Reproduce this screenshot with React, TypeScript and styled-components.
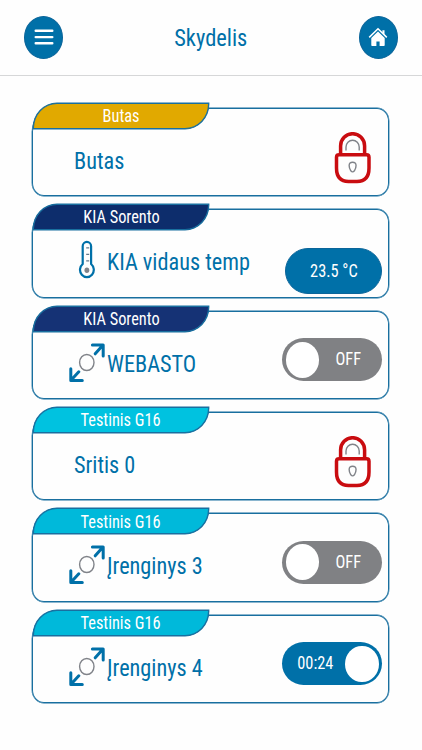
import React from 'react';
import styled, { createGlobalStyle } from 'styled-components';

const BLUE = '#0070a8';
const EDGE = '#196f9f';

const GlobalStyle = createGlobalStyle`
  * { box-sizing: border-box; }
  body { margin: 0; background: #fefefe; font-family: 'Roboto Condensed', Roboto, sans-serif; font-stretch: 75%; }
`;

const Screen = styled.div`
  width: 422px;
  height: 750px;
  overflow: hidden;
  background: #fefefe;
`;

const Header = styled.header`
  height: 76px;
  padding: 0 24px;
  display: flex;
  align-items: center;
  justify-content: space-between;
  border-bottom: 1px solid #d6d7d8;
`;

const RoundButton = styled.button`
  width: 39.4px;
  height: 43.4px;
  padding: 0;
  border: 1px solid #0b659a;
  border-radius: 50%;
  background: ${BLUE};
  display: grid;
  place-items: center;
`;

const Label = styled.span<{ $size: number; $origin?: string }>`
  display: block;
  white-space: nowrap;
  font-size: ${p => p.$size}px;
  line-height: 1;
  transform: scaleX(0.92);
  transform-origin: ${p => p.$origin ?? 'center'};
`;

const Title = styled.h1`
  margin: 0;
  padding-top: 1px;
  font-weight: 400;
  line-height: 1;
  color: ${BLUE};
`;

const List = styled.main`
  padding: 31.9px 33px 0 32px;
  display: flex;
  flex-direction: column;
  gap: 13px;
`;

const Card = styled.section`
  position: relative;
  height: 88.4px;
  border: 1px solid ${EDGE};
  box-shadow: 0 0 0 0.4px ${EDGE};
  border-radius: 22px 12px 12px 12px / 24px 13px 13px 13px;
  padding: 25px 6px 0 36px;
  display: flex;
  align-items: flex-start;
`;

const Tab = styled.div<{ $color: string }>`
  position: absolute;
  left: 0;
  top: -6px;
  width: 176px;
  height: 26px;
  border: 1px solid ${EDGE};
  box-shadow: 0 0 0 0.4px ${EDGE};
  border-radius: 24px 0 24px 0 / 25px 0 25px 0;
  background: ${p => p.$color};
  color: #fff;
  display: grid;
  place-items: center;
`;

const IconSlot = styled.div`
  width: 38px;
  height: 46px;
  flex: none;
`;

const Name = styled.div<{ $plain?: boolean }>`
  flex: 1;
  padding-top: 15px;
  padding-left: ${p => (p.$plain ? 5 : 0)}px;
  color: ${BLUE};
`;

const Reading = styled.div`
  width: 97px;
  height: 46px;
  margin-top: 13px;
  border: 1px solid #0b659a;
  border-radius: 23px;
  background: ${BLUE};
  color: #fff;
  display: grid;
  place-items: center;
`;

const Toggle = styled.button<{ $on?: boolean }>`
  width: 100px;
  height: 43px;
  margin-top: 1.4px;
  padding: 0 3.5px;
  border: 0;
  border-radius: 22px;
  background: ${p => (p.$on ? BLUE : '#808184')};
  color: #fff;
  font: inherit;
  display: flex;
  flex-direction: ${p => (p.$on ? 'row-reverse' : 'row')};
  align-items: center;
`;

const Knob = styled.span`
  width: 33.4px;
  height: 36px;
  border-radius: 50%;
  background: #fff;
`;

const ToggleText = styled.span`
  flex: 1;
  padding-right: 1px;
  padding-bottom: 1px;
  text-align: center;
`;

const LockSlot = styled.div`
  width: 37px;
  height: 52px;
  margin: -2px 11px 0 0;
`;

const Menu = () => (
  <svg width="20" height="16" viewBox="0 0 20 16" stroke="#fff" strokeWidth="2.4" strokeLinecap="round">
    <path d="M1.7 1.8h16.6M1.7 8.1h16.6M1.7 14.3h16.6" />
  </svg>
);

const Home = () => (
  <svg width="20" height="20" viewBox="0 0 20 20">
    <path d="M1.2 10.4 10 1.8l8.8 8.6" fill="none" stroke="#fff" strokeWidth="1.5" />
    <path d="M14.4 3.2h2.1v5l-2.1-2.2z" fill="#fff" />
    <path d="M3.300 10.900 10 4.500l6.700 6.400v7.400a.8.8 0 0 1-.8.8h-4.300v-4.500H8.400v4.500H4.100a.8.8 0 0 1-.8-.8z" fill="#fff" />
  </svg>
);

const Lock = () => (
  <svg width="37" height="52" viewBox="0 0 37 52" fill="none">
    <path d="M6.6 23V14a12 12.3 0 0 1 24 0v9" stroke="#c90c10" strokeWidth="3.5" />
    <path d="M4.4 22.8h28.2q2.4 0 2.4 2.5v10.700q0 13.500-12 13.500h-8.500q-12 0-12-13.500v-10.700q0-2.500 2.400-2.500z" stroke="#c90c10" strokeWidth="3.5" />
    <path d="M12 18.500v-3.500a6.600 6.800 0 0 1 13.200 0v3.500" stroke="#808389" strokeWidth="1.4" />
    <path d="M18.600 30.300c-5 0-3.600 5.500-1.800 8.500q1.800 2.200 3.600 0c1.800-3 3.200-8.500-1.800-8.500z" stroke="#808389" strokeWidth="1.4" />
  </svg>
);

const Expand = () => (
  <svg width="38" height="46" viewBox="0 0 38 46" fill="none">
    <g stroke={BLUE} strokeWidth="3" strokeLinecap="round" strokeLinejoin="round">
      <path d="M23.400 7.900h10.800v11M34 8.100l-7.800 8.700" />
      <path d="M1.800 31.800v11.700h11.500M2 43.200l7.800-8.400" />
    </g>
    <ellipse cx="17.800" cy="25.500" rx="7.200" ry="8" stroke="#808389" strokeWidth="1.400" />
  </svg>
);

const Thermometer = () => (
  <svg width="38" height="46" viewBox="0 0 38 46" fill="none">
    <path d="M13.700 29V11.200a4.200 4.300 0 0 1 8.400 0V29a6.900 7.300 0 1 1-8.400 0z" stroke={BLUE} strokeWidth="2.200" />
    <path d="M17.200 12.800h3M17.200 19.300h3M17.200 25.800h3" stroke="#65798b" strokeWidth="1.200" />
    <ellipse cx="17.900" cy="35.300" rx="2.400" ry="2.700" fill="#808389" />
  </svg>
);

type Item = {
  group: string;
  color: string;
  name: string;
  kind: 'lock' | 'temp' | 'switch';
  value?: string;
  on?: boolean;
};

const items: Item[] = [
  { group: 'Butas', color: '#e1a900', name: 'Butas', kind: 'lock' },
  { group: 'KIA Sorento', color: '#0d2d6c', name: 'KIA vidaus temp', kind: 'temp', value: '23.5 °C' },
  { group: 'KIA Sorento', color: '#153275', name: 'WEBASTO', kind: 'switch', value: 'OFF' },
  { group: 'Testinis G16', color: '#00c2e0', name: 'Sritis 0', kind: 'lock' },
  { group: 'Testinis G16', color: '#00b9da', name: 'Įrenginys 3', kind: 'switch', value: 'OFF' },
  { group: 'Testinis G16', color: '#00b9da', name: 'Įrenginys 4', kind: 'switch', value: '00:24', on: true },
];

export default function App() {
  return (
    <Screen>
      <GlobalStyle />
      <Header>
        <RoundButton aria-label="Menu"><Menu /></RoundButton>
        <Title><Label $size={24.4}>Skydelis</Label></Title>
        <RoundButton aria-label="Home"><Home /></RoundButton>
      </Header>
      <List>
        {items.map((item, i) => (
          <Card key={i}>
            <Tab $color={item.color}><Label $size={17.8}>{item.group}</Label></Tab>
            {item.kind !== 'lock' && (
              <IconSlot>{item.kind === 'temp' ? <Thermometer /> : <Expand />}</IconSlot>
            )}
            <Name $plain={item.kind === 'lock'}>
              <Label $size={24.2} $origin="left">{item.name}</Label>
            </Name>
            {item.kind === 'lock' && <LockSlot><Lock /></LockSlot>}
            {item.kind === 'temp' && <Reading><Label $size={17.8}>{item.value}</Label></Reading>}
            {item.kind === 'switch' && (
              <Toggle $on={item.on}>
                <Knob />
                <ToggleText><Label $size={17.8}>{item.value}</Label></ToggleText>
              </Toggle>
            )}
          </Card>
        ))}
      </List>
    </Screen>
  );
}
